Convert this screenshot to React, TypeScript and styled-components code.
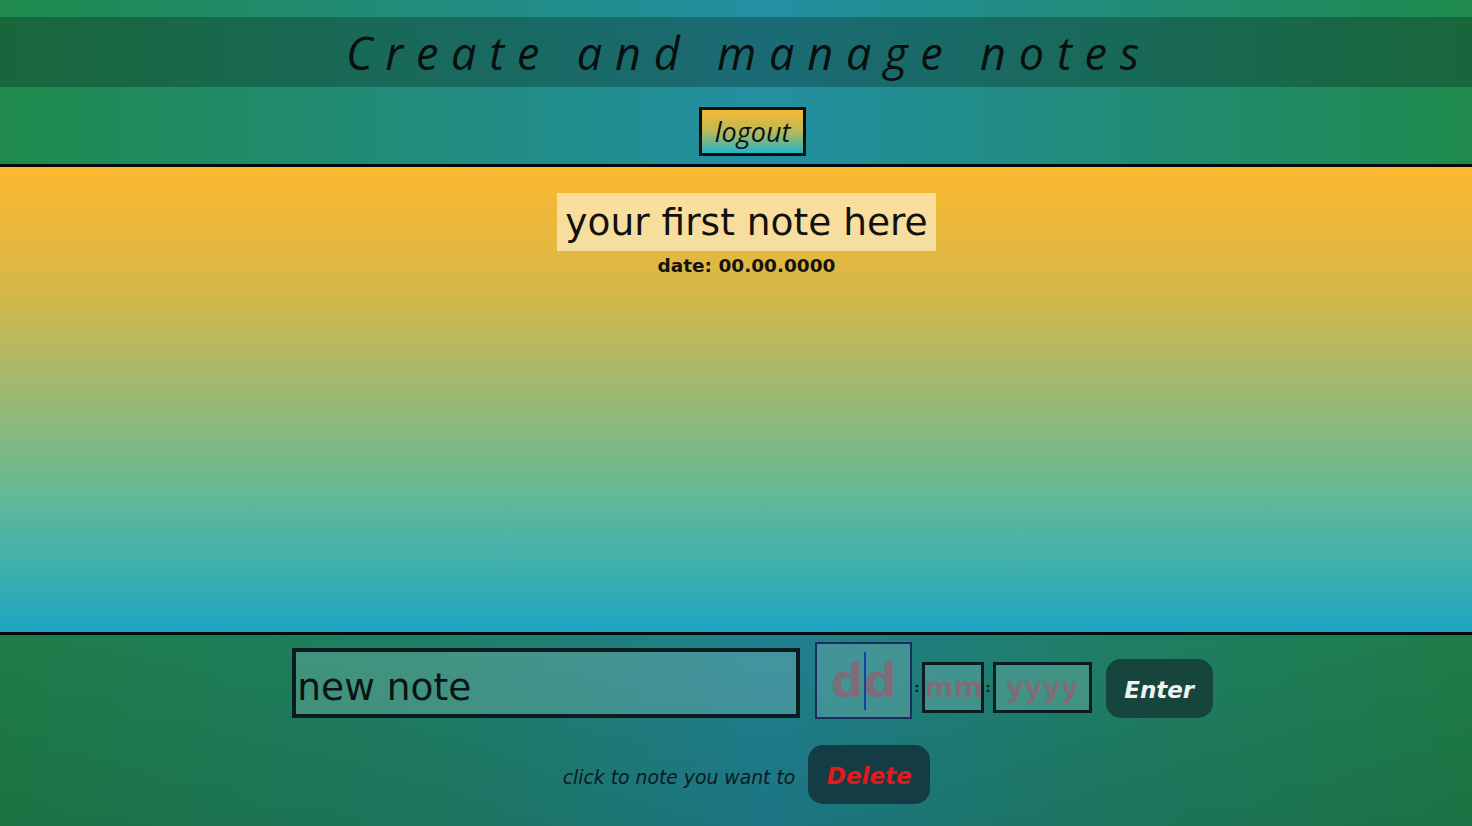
import React from "react";
import styled, { createGlobalStyle } from "styled-components";

const Global = createGlobalStyle`
  html, body { margin: 0; padding: 0; }
  body { font-family: "DejaVu Sans", Verdana, sans-serif; overflow: hidden; }
  * { box-sizing: border-box; }
`;

const Page = styled.div`
  width: 1472px;
  height: 826px;
  display: flex;
  flex-direction: column;
`;

const Header = styled.header`
  height: 167px;
  padding-top: 17px;
  display: flex;
  flex-direction: column;
  align-items: center;
  background: linear-gradient(90deg, #1f8a4c 0%, #218c7e 30%, #238fa2 52%, #218c7e 72%, #1f8a4c 100%);
  border-bottom: 3px solid #050b0c;
`;

const TitleBar = styled.div`
  width: 100%;
  height: 70px;
  background: rgba(10, 30, 25, 0.32);
  display: flex;
  align-items: center;
  justify-content: center;
`;

const Title = styled.h1`
  margin: 0;
  padding-left: 26px;
  font-family: "Open Sans", sans-serif;
  font-style: italic;
  font-weight: 400;
  font-size: 45px;
  letter-spacing: 12.8px;
  color: #08100e;
  line-height: 1;
`;

const LogoutButton = styled.button`
  margin-top: 20px;
  margin-left: 33px;
  width: 107px;
  height: 49px;
  border: 3px solid #0b0f10;
  background: linear-gradient(180deg, #f8b833 0%, #b9b95a 50%, #22b4c6 100%);
  font-family: "Open Sans", sans-serif;
  font-style: italic;
  font-size: 27px;
  color: #0d1212;
  padding: 0;
  line-height: 1;
`;

const Main = styled.main`
  height: 468px;
  border-bottom: 3px solid #050b0c;
  background: linear-gradient(180deg, #fcb92f 0%, #d9b846 25%, #9bb874 50%, #5db89a 73%, #1ea5c2 100%);
  display: flex;
  flex-direction: column;
  align-items: center;
  padding-top: 26px;
  padding-left: 21px;
`;

const NoteBox = styled.div`
  background: rgba(255, 245, 220, 0.62);
  padding: 0 8px;
  height: 58px;
  display: flex;
  align-items: center;
  font-size: 37.5px;
  color: #121110;
  cursor: pointer;
`;

const NoteDate = styled.div`
  margin-top: 4px;
  font-weight: 700;
  font-size: 18.5px;
  color: #141210;
`;

const Bottom = styled.footer`
  flex: 1;
  background:
    linear-gradient(180deg, rgba(0, 0, 0, 0) 0%, rgba(0, 20, 20, 0.1) 100%),
    linear-gradient(90deg, #1e7d48 0%, #1f7f66 30%, #1f8090 52%, #1f7f66 75%, #1e7d48 100%);
  display: flex;
  flex-direction: column;
  align-items: center;
  padding-top: 7px;
`;

const FormRow = styled.div`
  display: flex;
  align-items: center;
  padding-left: 33px;
`;

const NoteInput = styled.input`
  width: 508px;
  height: 70px;
  margin-top: 4px;
  border: 4px solid #0a1c20;
  background: rgba(150, 200, 200, 0.3);
  font-family: "DejaVu Sans", sans-serif;
  font-size: 37.5px;
  color: #0b1414;
  padding: 8px 0 0 1px;
  outline: none;
  &::placeholder { color: #0b1414; }
`;

const DateGroup = styled.div`
  display: flex;
  align-items: center;
  margin-left: 15px;
`;

const DateField = styled.div<{ $w: number; $h: number; $focused?: boolean; $offset?: number }>`
  position: relative;
  width: ${(p) => p.$w}px;
  height: ${(p) => p.$h}px;
  margin-top: ${(p) => p.$offset ?? 0}px;
  border: ${(p) => (p.$focused ? "2px solid #1b2d5c" : "3px solid #0b1c20")};
  background: rgba(150, 200, 195, 0.3);
  display: flex;
  align-items: center;
  justify-content: center;
  overflow: hidden;
`;

const DateInput = styled.input<{ $size: number }>`
  width: 100%;
  height: 100%;
  border: none;
  background: transparent;
  text-align: center;
  font-family: "DejaVu Sans", sans-serif;
  font-weight: 700;
  font-size: ${(p) => p.$size}px;
  padding: 0;
  outline: none;
  &::placeholder { color: rgba(140, 100, 115, 0.8); }
`;

const Caret = styled.span`
  position: absolute;
  left: 47px;
  top: 8px;
  width: 2px;
  height: 58px;
  background: #1f3f9a;
`;

const Colon = styled.span<{ $offset?: number }>`
  margin-top: ${(p) => (p.$offset ?? 0)}px;
  font-weight: 700;
  font-size: 13px;
  color: #0b1c20;
  padding: 0 2px;
`;

const ActionButton = styled.button<{ $color: string; $bg: string; $w: number }>`
  width: ${(p) => p.$w}px;
  height: 59px;
  border: none;
  border-radius: 15px;
  background: ${(p) => p.$bg};
  color: ${(p) => p.$color};
  font-family: "DejaVu Sans", sans-serif;
  font-weight: 700;
  font-style: italic;
  font-size: 23px;
  padding: 3px 0 0;
  cursor: pointer;
`;

const EnterWrap = styled.div`
  margin-left: 14px;
  margin-top: 15px;
`;

const DeleteRow = styled.div`
  display: flex;
  align-items: center;
  margin-top: 26px;
  padding-left: 21px;
  gap: 13px;
`;

const Hint = styled.span`
  font-style: italic;
  font-size: 18.8px;
  color: #0a1a26;
  margin-top: 5px;
`;

export default function App() {
  return (
    <Page>
      <Global />
      <Header>
        <TitleBar>
          <Title>Create and manage notes</Title>
        </TitleBar>
        <LogoutButton>logout</LogoutButton>
      </Header>
      <Main>
        <NoteBox>your first note here</NoteBox>
        <NoteDate>date: 00.00.0000</NoteDate>
      </Main>
      <Bottom>
        <FormRow>
          <NoteInput defaultValue="new note" />
          <DateGroup>
            <DateField $w={97} $h={77} $focused>
              <DateInput $size={46} placeholder="dd" />
              <Caret />
            </DateField>
            <Colon $offset={14}>:</Colon>
            <DateField $w={62} $h={51} $offset={13}>
              <DateInput $size={28} placeholder="mm" />
            </DateField>
            <Colon $offset={14}>:</Colon>
            <DateField $w={99} $h={51} $offset={13}>
              <DateInput $size={28} placeholder="yyyy" />
            </DateField>
          </DateGroup>
          <EnterWrap>
            <ActionButton $w={107} $bg="#16453e" $color="#eef3f0">Enter</ActionButton>
          </EnterWrap>
        </FormRow>
        <DeleteRow>
          <Hint>click to note you want to</Hint>
          <ActionButton $w={122} $bg="#133c44" $color="#e3191c">Delete</ActionButton>
        </DeleteRow>
      </Bottom>
    </Page>
  );
}
